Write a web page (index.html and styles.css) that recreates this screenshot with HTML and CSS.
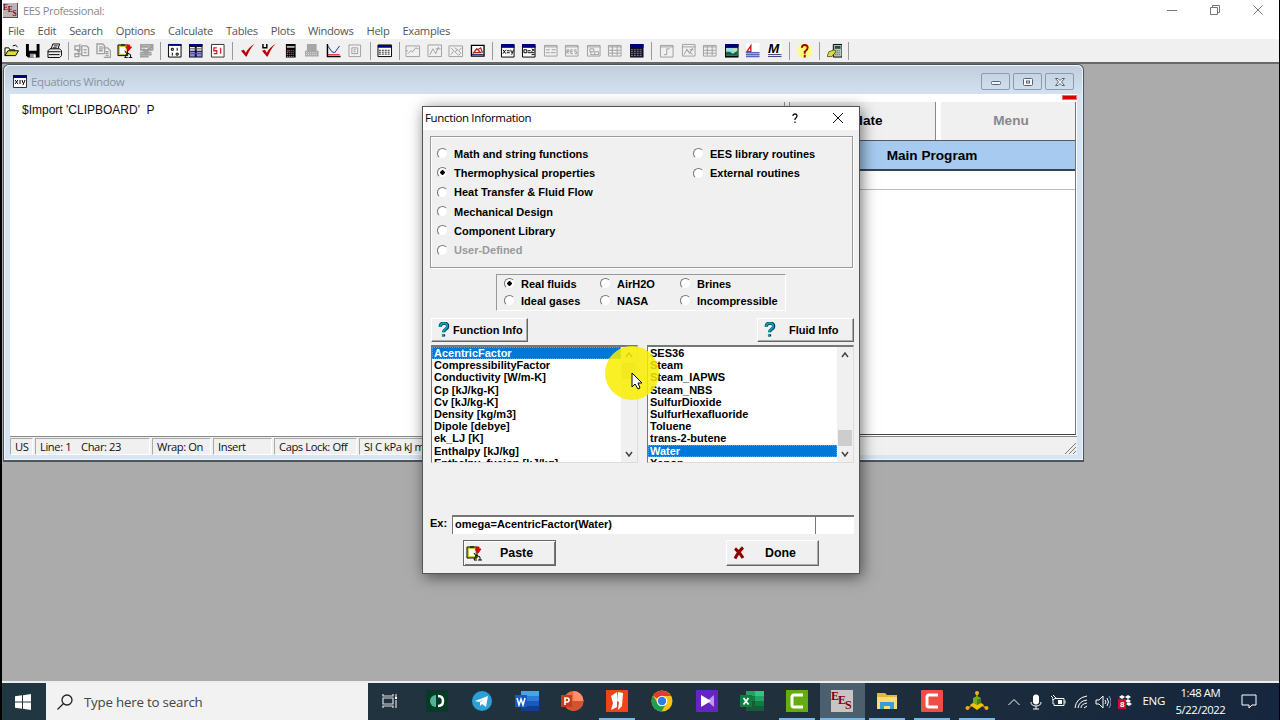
FILE: index.html
```html
<!DOCTYPE html>
<html lang="en">
<head>
  <title>EES Professional</title>
  <meta charset="UTF-8">
  <link rel="stylesheet" href="styles.css">
</head>
<body>
<svg class="defs">
  <symbol id="question" viewBox="0 0 12 16"><path d="M2 5C2 0 10 0 10 4.500C10 8 5.500 7.500 5.500 11M5.500 13v2.500" fill="none" stroke="#035" stroke-width="3.400"/><path d="M2 5C2 0 9.500 0 9.500 4.500C9.500 8 5 7.500 5 11M5 13v2.500" fill="none" stroke="#0aa5b5" stroke-width="2"/></symbol>
  <symbol id="paste" viewBox="0 0 16 16"><path d="M1 2h10v11H1z" fill="#cc3" stroke="#000"/><path d="M3 4h6v7H3z" fill="#fff"/><path d="M4 1h4v2H4z" fill="#333"/><path d="M11 2h2v2h2l-3 4-3-4h2z" fill="#d00" stroke="#d00"/><path d="M8 8l2 3-2 4M10 10l4 2v3M8 15h3M12 15h4" stroke="#000" fill="none"/></symbol>
  <symbol id="up" viewBox="0 0 8 8"><path d="M1 6l3-4 3 4" fill="none" stroke="#444" stroke-width="1.500"/></symbol>
  <symbol id="down" viewBox="0 0 8 8"><path d="M1 2l3 4 3-4" fill="none" stroke="#444" stroke-width="1.500"/></symbol>
  <symbol id="grid" viewBox="0 0 16 16"><path d="M1 2h14v12H1z" fill="#fff" stroke="#000"/><path d="M1 2h14v3H1z" fill="#000080"/><path d="M2 7.500h12M2 9.500h12M2 11.500h12" stroke="#222" stroke-dasharray="2 1"/></symbol>
</svg>
<div class="screen">
  <header class="titlebar">
    <svg class="app-icon" viewBox="0 0 16 16"><path d="M0 0h16v16H0z" fill="#bbb4b4"/><path d="M0 15.500h16M15.500 0v16" stroke="#544"/><g fill="#800010" font-family="Liberation Serif" font-weight="bold" font-size="8"><text x="0" y="7">E</text><text x="5" y="10">E</text><text x="10" y="14">S</text></g></svg>
    <span class="app-name">EES Professional:</span>
    <div class="win-controls">
      <svg viewBox="0 0 10 10"><path d="M0 5.500h10"/></svg>
      <svg viewBox="0 0 10 10"><path d="M.5 2.500h7v7h-7zM2.500 2.500v-2h7v7h-2"/></svg>
      <svg viewBox="0 0 10 10"><path d="M.5.500l9 9M9.500.500l-9 9"/></svg>
    </div>
  </header>
  <nav class="menu">
    <span>File</span><span>Edit</span><span>Search</span><span>Options</span><span>Calculate</span><span>Tables</span><span>Plots</span><span>Windows</span><span>Help</span><span>Examples</span>
  </nav>
  <div class="toolbar">
    <svg viewBox="0 0 16 16"><path d="M1 13V5h4l1 2h5v2" fill="#ffc" stroke="#000"/><path d="M1 13l3-5h11l-3 5z" fill="#dd3" stroke="#000"/><path d="M9 3q3-2 5 1" fill="none" stroke="#000"/></svg>
    <svg viewBox="0 0 16 16"><path d="M1 1h14v14H3l-2-2z"/><path d="M4 1h8v7H4z" fill="#eee"/><path d="M5 11h6v4H5z" fill="#999"/><path d="M9 12h2v3H9z" fill="#fff"/></svg>
    <svg viewBox="0 0 16 16"><path d="M4 7l2-6h7l-2 6z" fill="#fff" stroke="#000"/><path d="M1 8l2-2h10l2 2v5l-2 2H1z" fill="#eee" stroke="#000"/><path d="M1 9h13M2 12h11M7 3h4M6 5h4" stroke="#000"/></svg>
    <i class="narrow"></i>
    <svg class="off" viewBox="0 0 16 16"><path d="M1 3h5v4H1zM6 1v7l-3 4M3 7l4 5M8 3h5l2 2v8H8zM10 7h3M10 10h3M1 11h4v3H1z" stroke-width="1.400"/></svg>
    <svg class="off" viewBox="0 0 16 16"><path d="M1 1h6l2 2v8H1zM3 4h4M3 6h4M3 8h4M7 5h5l3 3v7H8M10 9h3M10 11h3M10 13h3" stroke-width="1.400"/></svg>
    <svg><use href="#paste"/></svg>
    <svg class="off" viewBox="0 0 16 16"><path d="M2 2h12v5H2zM2 4h8M1 10h12M1 12h12M1 14h9" stroke-width="1.800"/><path d="M4 6l3 4 7-8" stroke-width="3"/></svg>
    <i class="narrow"></i>
    <svg viewBox="0 0 16 16"><path d="M1.500 1.500h13v13h-13z" fill="#fff" stroke="#000"/><path d="M1 1h14v2H1z" fill="#000080"/><path d="M4.500 5.500h2v2h-2zM10.500 5v3M5.500 10v3M9.500 10.500h2v2h-2z" fill="none" stroke="#000"/></svg>
    <svg viewBox="0 0 16 16"><path d="M1 1h14v14H1z" fill="#112"/><path d="M1 1h14v2H1z" fill="#008"/><path d="M2 4h5v4H2zM9 4h5v4H9z" fill="#eee"/><path d="M2 9h5v5H2zM9 9h5v5H9z" fill="#88e"/><path d="M2 6h12M2 11h12" stroke="#555"/></svg>
    <svg viewBox="0 0 16 16"><path d="M1.500 1.500h13v13h-13z" fill="#fff" stroke="#333"/><path d="M7 5H4v3h3v3H4M11 5v6" fill="none" stroke="#c22" stroke-width="1.300"/></svg>
    <i></i>
    <svg viewBox="0 0 16 16"><path d="M1 8l3-1 2 3q3-6 9-9-5 5-8 13H6z" fill="#c00000"/></svg>
    <svg viewBox="0 0 16 16"><path d="M1 8l3-1 2 3q3-6 9-9-5 5-8 13H6z" fill="#c00000"/><path d="M2 1v4h4V1" fill="none" stroke="#000" stroke-width="1.500"/></svg>
    <svg viewBox="0 0 16 16"><path d="M3 1h10v14H3z"/><path d="M4 3h8v2H4z" fill="#aba"/><path d="M4 8h8M4 10h8M4 12h8M4 14h8" stroke="#aaa" stroke-dasharray="1 1"/><path d="M4 7h2v2H4z" fill="#c22"/></svg>
    <svg viewBox="0 0 16 16"><path d="M3 1h10v7H3zM1 8h14v6H1z" fill="#a6a6a6"/><path d="M2 10h12M2 12h12" stroke="#eee" stroke-dasharray="1 1"/></svg>
    <svg viewBox="0 0 16 16"><path d="M1.500 1v13H15" fill="none" stroke="#000" stroke-width="1.500"/><path d="M2 3l4 6 3 1 5-7" fill="none" stroke="#22a"/><path d="M2 12h12" stroke="#d22"/></svg>
    <svg class="off" viewBox="0 0 16 16"><path d="M2 2h12v12H2zM5 5h6v6H5zM7 8q0-2 2-1M7 9h2"/></svg>
    <i></i>
    <svg><use href="#grid"/></svg>
    <i class="narrow"></i>
    <svg class="off" viewBox="0 0 16 16"><path d="M1 3h14v11H1zM3 11l3-3 2 1 3-4 3 1M1 8h2"/></svg>
    <svg class="off" viewBox="0 0 16 16"><path d="M1 2h14v12H1zM3 12l3-6 3 5 3-7M9 6h5"/></svg>
    <svg class="off" viewBox="0 0 16 16"><path d="M1 3h14v11H1zM3 5l3 3-3 4M7 5l3 2-3 2 3 3M14 5l-3 3 2 2-2 3"/></svg>
    <svg viewBox="0 0 16 16"><path d="M1.500 2.500h13v11h-13z" fill="#fff" stroke="#000" stroke-width="1.400"/><path d="M3 11l4-5 4 4H4M8 7l3-2 2 5" fill="none" stroke="#a22" stroke-width="1.300"/><path d="M2 12h12" stroke="#116"/></svg>
    <i></i>
    <svg viewBox="0 0 16 16"><path d="M1.500 2.500h13v12h-13z" fill="#fff" stroke="#000"/><path d="M1 1h14v4H1z" fill="#000080"/><path d="M3 7l3 4M6 7l-3 4M7 8h3M7 10h3M11 7l1 3M14 7l-2 5" stroke="#000"/></svg>
    <svg viewBox="0 0 16 16"><path d="M1.500 2.500h13v12h-13z" fill="#fff" stroke="#000"/><path d="M1 1h14v4H1z" fill="#000080"/><path d="M3 7h3v3H3zM7 8h3M7 10h3M11 6l3 2M14 6l-3 3M10 10h4M11 12h3" stroke="#000" fill="none"/></svg>
    <svg class="off" viewBox="0 0 16 16"><path d="M1.500 2.500h13v11h-13zM1 4h14M3 7h4M9 7h4M3 10h4M8 10h5"/></svg>
    <svg class="off" viewBox="0 0 16 16"><path d="M1.500 2.500h13v11h-13zM1 4h14M3 11V7h2v2H3l2 2M9 7H7v4h2M7 9h2M13 7h-2v2h2v2h-2"/></svg>
    <svg class="off" viewBox="0 0 16 16"><path d="M1.500 2.500h13v11h-13zM1 4h14M4 6h4v3H4zM9 9h4v3H9zM5 9v3h4"/></svg>
    <svg class="off" viewBox="0 0 16 16"><path d="M1.500 2.500h13v11h-13zM1 4h14M5.500 3v10M10.500 3v10M2 7.500h12M2 10.500h12"/></svg>
    <svg viewBox="0 0 16 16"><path d="M1 1h14v14H1z" fill="#112"/><path d="M1 1h14v4H1z" fill="#000080"/><path d="M2 7h12M2 9h12M2 11h12M2 13h12" stroke="#889" stroke-dasharray="2 1"/></svg>
    <i></i>
    <svg class="off" viewBox="0 0 16 16"><path d="M1.500 2.500h13v12h-13zM1 4h14M5 12h3V6h3"/></svg>
    <svg class="off" viewBox="0 0 16 16"><path d="M1.500 1.500h13v12h-13zM1 4h14M3 12l3-5 3 4 3-6M9 7h4M5 6l7 6"/></svg>
    <svg class="off" viewBox="0 0 16 16"><path d="M1.500 2.500h13v11h-13zM1 4h14M5.500 3v10M10.500 3v10M2 7.500h12M2 10.500h12"/></svg>
    <svg viewBox="0 0 16 16"><path d="M1 1h14v14H1z"/><path d="M1 1h14v3H1z" fill="#000080"/><path d="M2 5h12v8H2z" fill="#9dd"/><path d="M2 9h4l3 2 5-3v5H2z" fill="#164"/><path d="M10 6h3v2h-3z" fill="#ee3"/></svg>
    <svg viewBox="0 0 16 16"><path d="M1 0h14v9H1z" fill="#fff"/><path d="M2 9l4-6v6z" fill="none" stroke="#c22" stroke-width="1.500"/><path d="M1 10h14M1 12h14M1 14h14" stroke="#56b" stroke-width="1.500"/></svg>
    <svg viewBox="0 0 16 16"><path d="M1 0h14v15H1z" fill="#fff"/><text x="1" y="10.500" font-family="Liberation Sans" font-size="14" font-weight="bold" font-style="italic">M</text><path d="M1 12h14M1 14h14" stroke="#337"/></svg>
    <i></i>
    <svg viewBox="0 0 16 16"><circle cx="8" cy="8" r="7.500" fill="#ffff78"/><path d="M5 5q0-3 3-3t3 3q0 2-3 4v2M8 12v3" fill="none" stroke="#a00000" stroke-width="2"/></svg>
    <i></i>
    <svg viewBox="0 0 16 16"><path d="M6.500 1.500h9v13h-9z" fill="#bcb" stroke="#000"/><path d="M8 3h6v3H8z" fill="#253"/><path d="M8 8h6M8 10h6M8 12h6" stroke="#444" stroke-dasharray="1 1"/><path d="M0 14l2-5 6-2 1 2-4 5z" fill="#dd3" stroke="#330" stroke-width=".7"/></svg>
    <i class="narrow"></i>
  </div>

  <main class="workspace">
    <section class="eq-window">
      <div class="eq-title">
        <svg class="eq-icon" viewBox="0 0 14 13"><path d="M.5 1.500h13v11H.500z" fill="#fff" stroke="#333"/><path d="M0 0h14v3H0z" fill="#000080"/><path d="M2 5l3 4M5 5l-3 4M6 6h2M6 8h2M9 5l1 3M12 5l-2 5" stroke="#000"/></svg>
        <span>Equations Window</span>
        <div class="eq-controls">
          <b><svg viewBox="0 0 12 10"><rect x="1.500" y="4.500" width="9" height="3" rx="1"/></svg></b>
          <b><svg viewBox="0 0 12 10"><rect x="1.500" y="1.500" width="9" height="7" rx="1"/><rect x="4.500" y="4" width="3" height="2"/></svg></b>
          <b><svg viewBox="0 0 12 10"><path d="M1.500 1.500h2.500l2 2 2-2h2.500L7.500 5l3 3.500H8l-2-2-2 2H1.500L4.500 5z"/></svg></b>
        </div>
      </div>
      <div class="eq-body">
        <div class="editor"><span>$Import 'CLIPBOARD'&nbsp; P</span></div>
        <aside class="diagram">
          <div class="diagram-buttons"><div class="update">Update</div><div class="menu-button">Menu</div></div>
          <div class="program">Main Program</div>
          <div class="program-row"></div>
        </aside>
        <div class="red-mark"></div>
      </div>
      <footer class="status">
        <span class="s-us">US</span><span class="s-line">Line: 1 &nbsp;&nbsp; Char: 23</span><span class="s-wrap">Wrap: On</span><span class="s-ins">Insert</span><span class="s-caps">Caps Lock: Off</span><span class="s-unit">SI C kPa kJ mass deg</span>
        <svg class="grip" viewBox="0 0 12 12"><path d="M1 12L12 1M5 12l7-7M9 12l3-3" stroke="#777"/></svg>
      </footer>
    </section>

    <section class="dialog">
      <div class="dialog-title"><span>Function Information</span><svg class="help" viewBox="0 0 6 10"><path d="M1 3q0-2 2-2t2 2q0 1-2 3v1M3 8.500V10" fill="none" stroke="#111" stroke-width="1.300"/></svg><svg class="close" viewBox="0 0 10 10"><path d="M0 0l10 10M10 0L0 10" stroke="#111"/></svg></div>
      <div class="categories">
        <div class="column">
          <label><i class="radio"></i>Math and string functions</label>
          <label><i class="radio on"></i>Thermophysical properties</label>
          <label><i class="radio"></i>Heat Transfer &amp; Fluid Flow</label>
          <label><i class="radio"></i>Mechanical Design</label>
          <label><i class="radio"></i>Component Library</label>
          <label class="disabled"><i class="radio"></i>User-Defined</label>
        </div>
        <div class="column">
          <label><i class="radio"></i>EES library routines</label>
          <label><i class="radio"></i>External routines</label>
        </div>
      </div>
      <div class="fluids">
        <label><i class="radio on"></i>Real fluids</label><label><i class="radio"></i>AirH2O</label><label><i class="radio"></i>Brines</label>
        <label><i class="radio"></i>Ideal gases</label><label><i class="radio"></i>NASA</label><label><i class="radio"></i>Incompressible</label>
      </div>
      <div class="info-row">
        <div class="btn fn-info"><svg><use href="#question"/></svg><span>Function Info</span></div>
        <div class="btn fl-info"><svg><use href="#question"/></svg><span>Fluid Info</span></div>
      </div>
      <div class="lists">
        <div class="list">
          <ul><li class="selected">AcentricFactor</li><li>CompressibilityFactor</li><li>Conductivity [W/m-K]</li><li>Cp [kJ/kg-K]</li><li>Cv [kJ/kg-K]</li><li>Density [kg/m3]</li><li>Dipole [debye]</li><li>ek_LJ [K]</li><li>Enthalpy [kJ/kg]</li><li>Enthalpy_fusion [kJ/kg]</li></ul>
          <div class="scroll top"><svg><use href="#up"/></svg><div class="thumb"></div><svg><use href="#down"/></svg></div>
        </div>
        <div class="list">
          <ul><li>SES36</li><li>Steam</li><li>Steam_IAPWS</li><li>Steam_NBS</li><li>SulfurDioxide</li><li>SulfurHexafluoride</li><li>Toluene</li><li>trans-2-butene</li><li class="selected">Water</li><li>Xenon</li></ul>
          <div class="scroll bottom"><svg><use href="#up"/></svg><div class="thumb"></div><svg><use href="#down"/></svg></div>
        </div>
      </div>
      <div class="example"><span>Ex:</span><div class="field">omega=AcentricFactor(Water)</div><div class="field unit"></div></div>
      <div class="actions">
        <div class="btn paste"><svg><use href="#paste"/></svg><span>Paste</span></div>
        <div class="btn done"><svg viewBox="0 0 12 14"><path d="M2 2.500q5 4 8 9.500M10 1.500Q6 5 2 12.500" fill="none" stroke="#8b0000" stroke-width="3"/></svg><span>Done</span></div>
      </div>
    </section>
    <div class="spot"></div>
    <svg class="pointer" viewBox="0 0 12 18"><path d="M1 1v14l3-3 3 5 2-1-2-5h4z" fill="#fff" stroke="#000"/></svg>
  </main>

  <footer class="taskbar">
    <div class="start"><svg viewBox="0 0 16 16"><path d="M0 2.300L7 1.300V7.500H0zM8 1.200L16 0v7.500H8zM0 8.500h7v6.200L0 13.700zM8 8.500h8V16l-8-1.200z" fill="#fff"/></svg></div>
    <div class="search"><svg viewBox="0 0 16 16"><circle cx="10" cy="6" r="5"/><path d="M6.500 9.500L.5 15.500"/></svg><span>Type here to search</span></div>
    <div class="task view"><svg viewBox="0 0 16 16"><path d="M1 1v2h10V1M1 5h10v6H1zM1 15v-2h10v2M14 1v3M14 7v8" fill="none" stroke="#ddd" stroke-width="1.200"/><path d="M13 4h2v2h-2z" fill="#fff"/></svg></div>
    <div class="task"><svg viewBox="0 0 22 22"><path d="M0 0h22v22H0z" fill="#063b27"/><path d="M10 5v12a6 6 0 0 1 0-12z" fill="#52b59a"/><path d="M12 6q5 0 5 5t-5 5" fill="none" stroke="#fff" stroke-width="2.500"/></svg></div>
    <div class="task"><svg viewBox="0 0 22 22"><circle cx="11" cy="11" r="10" fill="#2ba0d8"/><path d="M4 11l13-5-2 11-4-3-2 2v-4l5-4-6 4z" fill="#fff"/></svg></div>
    <div class="task"><svg class="wide" viewBox="0 0 24 22"><path d="M6 1h18v5H6z" fill="#41a5ee"/><path d="M6 6h18v5H6z" fill="#2b7cd3"/><path d="M6 11h18v5H6z" fill="#185abd"/><path d="M6 16h18v5H6z" fill="#103f91"/><path d="M0 5h12v12H0z" fill="#185abd"/><path d="M2 8l2 7 2-6 2 6 2-7" fill="none" stroke="#fff" stroke-width="1.500"/></svg></div>
    <div class="task"><svg class="wide" viewBox="0 0 24 22"><circle cx="13.500" cy="11" r="10" fill="#ed6c47"/><path d="M13.500 1a10 10 0 0 1 10 10h-10z" fill="#ff8f6b"/><path d="M3.500 11h20a10 10 0 0 1-20 0z" fill="#d35230"/><path d="M1 5h11v12H1z" fill="#c43e1c"/><path d="M5 15V8h2q2 0 2 2t-2 2H5" fill="none" stroke="#fff" stroke-width="1.600"/></svg></div>
    <div class="task running"><svg viewBox="0 0 22 22"><path d="M0 0h22v22H0z" fill="#ee4418"/><path d="M5 6l6-4v15l-6 3 2-7zM12 2l5 1-1 13-4 4 1-8-2-1z" fill="#fff"/></svg></div>
    <div class="task"><svg viewBox="0 0 22 22"><circle cx="11" cy="11" r="10.500" fill="#fbc116"/><path d="M11 11L1.900 5.800A10.500 10.500 0 0 1 20 6H11z" fill="#e33b2e"/><path d="M1.900 5.800A10.500 10.500 0 0 0 10.500 21.500L15 14l-8-1z" fill="#229f4c"/><circle cx="11" cy="11" r="5.300" fill="#fff"/><circle cx="11" cy="11" r="4.200" fill="#3978e8"/></svg></div>
    <div class="task"><svg viewBox="0 0 22 22"><path d="M0 0h22v22H0z" fill="#6524c4"/><path d="M18 5v12l-7-6z" fill="#b99af0"/><path d="M5 5l10 6-10 6z" fill="#fff"/></svg></div>
    <div class="task"><svg class="wide" viewBox="0 0 24 22"><path d="M6 1h18v5H6z" fill="#21a366"/><path d="M15 1h9v5h-9z" fill="#33c481"/><path d="M6 6h9v5H6z" fill="#107c41"/><path d="M15 6h9v5h-9z" fill="#21a366"/><path d="M6 11h18v10H6z" fill="#185c37"/><path d="M15 11h9v5h-9z" fill="#107c41"/><path d="M0 5h12v12H0z" fill="#107c41"/><path d="M3.500 8l5 6.500M8.500 8l-5 6.500" stroke="#fff" stroke-width="1.700"/></svg></div>
    <div class="task running"><svg viewBox="0 0 22 22"><path d="M0 0h22v22H0z" fill="#63ad12"/><path d="M17 5H8q-2 0-2 2v8q0 2 2 2h9" fill="none" stroke="#fff" stroke-width="3"/></svg></div>
    <div class="task running active"><svg viewBox="0 0 22 22"><path d="M0 0h22v22H0z" fill="#c8c4c4"/><g fill="#800010" font-family="Liberation Serif" font-weight="bold" font-size="12"><text x="0" y="10">E</text><text x="7" y="14">E</text><text x="14" y="19">S</text></g></svg></div>
    <div class="task running"><svg viewBox="0 0 22 22"><path d="M1 3h8l2 2h10v14H1z" fill="#e9b63d"/><path d="M1 7h20v12H1z" fill="#ffdc73"/><path d="M4 19v-7h14v7h-4v-3H8v3z" fill="#3c9bd6"/></svg></div>
    <div class="task running"><svg viewBox="0 0 22 22"><rect width="22" height="22" rx="1" fill="#ef4e45"/><path d="M17 5H8q-2 0-2 2v8q0 2 2 2h9" fill="none" stroke="#fff" stroke-width="3"/></svg></div>
    <div class="task running"><svg class="wide" viewBox="0 0 24 22"><path d="M12 3v9L3 18M12 12l9 6" fill="none" stroke="#c90" stroke-width="1.500"/><path d="M12 10l7 5-7 5-7-5z" fill="#f4c400"/><path d="M8 8l4-2 4 2v5l-4 2-4-2z" fill="#6fae18"/><path d="M12 10l4-2v5l-4 2z" fill="#4a7d12"/><circle cx="12" cy="3" r="2" fill="#f5b80c"/><circle cx="2.500" cy="18" r="2" fill="#f5a90c"/><circle cx="21.500" cy="18" r="2" fill="#f5a90c"/></svg></div>
    <div class="tray">
      <svg viewBox="0 0 16 16"><path d="M2.500 11L8 5.500l5.500 5.500"/></svg>
      <svg viewBox="0 0 16 16"><rect x="5.500" y="1" width="5" height="9" rx="2" fill="#fff"/><path d="M3 8q0 4 5 4t5-4M8 12v3M5 15h6"/></svg>
      <svg viewBox="0 0 16 16"><path d="M5 4.500h9v7H4v-2M15 6.500v3M1 2l2 2M3 1l2 2M2 5q2 2 4-2M3 5v5"/><path d="M8 6h4v4H8z" fill="#fff" stroke="none"/></svg>
      <svg viewBox="0 0 16 16"><path d="M2 14Q3 4 14 2M5 14q1-7 9-8M8 14q0-4 6-5M11 14l3-2"/></svg>
      <svg viewBox="0 0 16 16"><path d="M1 6h3l4-4v12l-4-4H1zM10 6q2 2 0 4M12 4q3 4 0 8"/><path d="M14 2q4 6 0 12" stroke="#89a"/></svg>
      <svg viewBox="0 0 16 16"><path d="M5 1l3 2-3 2-3-2zM11 1l3 2-3 2-3-2zM11 5l3 2-3 2-3-2zM9 10l3 2 3-2-3-2z" fill="#fff" stroke="none"/><path d="M1 5h8v10H1z" fill="#c8102e" stroke="none"/><text x="3" y="13" font-size="8" fill="#fff" stroke="none" font-weight="bold" font-family="Liberation Sans">8</text></svg>
    </div>
    <span class="lang">ENG</span>
    <div class="clock"><span>1:48 AM</span><span>5/22/2022</span></div>
    <svg class="notice" viewBox="0 0 16 16"><path d="M1 2h14v10h-4l-3 3v-3H1z" fill="none" stroke="#fff"/></svg>
  </footer>
</div>
</body>
</html>
```
FILE: styles.css
```css
* { box-sizing: border-box; }
body { margin: 0; background: #000; font-family: "Open Sans", sans-serif; }
svg { display: block; flex: none; }
.defs { display: none; }
.screen { width: 1280px; height: 720px; padding: 0 1px 0 2px; display: flex; flex-direction: column; overflow: hidden; }

.titlebar { height: 21px; background: #fff; display: flex; align-items: center; padding-left: 1px; flex: none; }
.app-icon { width: 15px; height: 15px; }
.app-name { margin-left: 5px; font-size: 11px; color: #888; letter-spacing: -0.35px; }
.win-controls { margin-left: auto; display: flex; gap: 33px; padding: 0 16px 2px 0; }
.win-controls svg { width: 10px; height: 10px; fill: none; stroke: #777; }
.menu { height: 18px; background: #fff; display: flex; gap: 13px; padding-left: 6px; font-size: 11.2px; line-height: 19px; color: #555; letter-spacing: -0.3px; flex: none; }
.toolbar { height: 25px; background: #f0f0f0; border-bottom: 2px solid #686868; display: flex; align-items: center; flex: none; }
.toolbar svg { width: 15.5px; height: 15.5px; margin: 0 3px; }
.toolbar svg:first-child { margin-left: 1.5px; }
.toolbar i { width: 1px; height: 18px; margin: 0 3.8px; background: #999; }
.toolbar i.narrow { margin: 0 2.7px; }
.off { fill: none; stroke: #a0a0a0; }

.workspace { position: relative; height: 617px; background: #ababab; flex: none; }
.eq-window { position: absolute; left: 1px; top: 0; width: 1081px; height: 398px; border: 1px solid #4b555e; border-bottom-width: 2px; border-radius: 6px 6px 0 0; background: #d7e4f2; box-shadow: inset 0 0 0 1px #eff5fb; padding: 0 6px; }
.eq-title { height: 28px; margin: 1px -5px 0; padding: 3px 8px 0 8px; background: linear-gradient(#c2cedc, #d3e1f0); border-radius: 5px 5px 0 0; display: flex; align-items: center; font-size: 11.5px; letter-spacing: -0.4px; color: #8795a3; }
.eq-icon { width: 14px; height: 13px; }
.eq-title span { margin-left: 4px; }
.eq-controls { margin-left: auto; display: flex; gap: 3px; }
.eq-controls b { width: 29px; height: 17px; border: 1px solid #8a9cb0; border-radius: 2px; display: flex; align-items: center; justify-content: center; }
.eq-controls svg { width: 12px; height: 10px; fill: #f4f8fc; stroke: #556373; }
.eq-body { position: relative; height: 343px; background: #fff; border-bottom: 1px solid #888; display: flex; }
.editor { flex: 1; padding: 7px 12px; font: 12px/18px "Liberation Sans", sans-serif; color: #111; }
.diagram { width: 292px; border-right: 1px solid #777; border-bottom: 1px solid #444; margin: 8px 1px 1px 0; font-family: "Liberation Sans", sans-serif; font-weight: bold; font-size: 13.6px; text-align: center; }
.diagram-buttons { height: 38px; display: flex; line-height: 38px; gap: 5px; border-left: 1px solid #999; padding-left: 4px; }
.update { width: 147px; background: #f0f0f0; border-left: 1px solid #999; border-right: 1px solid #888; padding-right: 6px; }
.menu-button { flex: 1; color: #888; background: #f0f0f0; padding-left: 6px; }
.program { height: 31px; line-height: 29px; background: #a6caf0; border-top: 1px solid #556; border-bottom: 2px solid #345; padding-left: 5px; }
.program-row { height: 19px; border-bottom: 1px solid #bbb; }
.red-mark { position: absolute; right: 0; top: 1px; width: 15px; height: 5px; background: #d90000; border: 1px solid #f66; }
.status { height: 18px; display: flex; background: #f0f0f0; font-size: 11.2px; line-height: 16px; letter-spacing: -0.42px; padding-top: 1px; color: #111; }
.status span { border: 1px solid #aaa; border-right-color: #fff; border-bottom-color: #fff; padding-left: 4px; margin-right: 2px; white-space: nowrap; overflow: hidden; }
.s-us { width: 23px; }
.s-line { width: 115px; }
.s-wrap { width: 59px; }
.s-ins { width: 59px; }
.s-caps { width: 83px; }
.s-unit { width: 120px; }
.grip { margin: 4px 1px 0 auto; width: 12px; height: 12px; }

.dialog { position: absolute; left: 420px; top: 42px; width: 438px; height: 468px; background: #f0f0f0; border: 1px solid #555; box-shadow: 2px 3px 14px rgba(0,0,0,0.55); font: bold 11px/12px "Liberation Sans", sans-serif; color: #000; }
.dialog-title { height: 23px; background: #fff; display: flex; align-items: center; padding: 0 16px 2px 2px; font: 11.5px "Open Sans", sans-serif; letter-spacing: -0.35px; }
.help { width: 6px; height: 10px; margin-left: auto; margin-right: 35px; }
.close { width: 10px; height: 10px; }
.categories { margin: 6px 6px 0 7px; height: 132px; border: 1px solid #999; box-shadow: inset 1px 1px #fff, 1px 1px #fff; padding: 7px 6px; display: flex; }
.column { width: 256px; flex: none; display: flex; flex-direction: column; }
label { display: flex; align-items: center; height: 19.4px; white-space: nowrap; }
.radio { width: 11px; height: 11px; border-radius: 50%; background: #fff; border: 1px solid; border-color: #777 #eee #eee #777; margin-right: 6px; flex: none; }
.on { background: radial-gradient(circle, #000 0, #000 2px, #fff 2.4px); }
.disabled { color: #999; }
.fluids { margin: 6px 0 0 73px; width: 290px; height: 37px; border: 1px solid #999; border-right-color: #fff; border-bottom-color: #fff; display: grid; grid-template-columns: 96px 80px 1fr; grid-template-rows: 17px 17px; padding: 0 7px; }
.fluids label { height: 17px; }
.info-row { margin: 7px 5px 0 8px; display: flex; justify-content: space-between; }
.btn { display: flex; align-items: center; border: 1px solid; border-color: #fff #666 #666 #fff; box-shadow: inset -1px -1px #aaa; }
.info-row .btn { height: 24px; width: 97px; padding: 0 0 1px 6px; }
.info-row svg { width: 12px; height: 15px; margin-right: 3px; }
.info-row .fl-info svg { margin-right: 13px; }
.lists { margin: 3px 5px 0 8px; display: flex; justify-content: space-between; }
.list { width: 207px; height: 118px; background: #fff; border: 1px solid #ddd; border-top: 2px solid #777; border-left-color: #777; overflow: hidden; display: flex; }
ul { list-style: none; margin: 0; padding: 0; flex: 1; }
li { height: 12.2px; line-height: 12.2px; padding-left: 2px; white-space: nowrap; }
.selected { background: #0078d7; color: #fff; outline: 1px dotted #5aa5e0; outline-offset: -1px; }
.scroll { width: 16px; background: #f0f0f0; display: flex; flex-direction: column; align-items: center; padding: 4px 0; }
.scroll svg { width: 8px; height: 8px; }
.thumb { width: 14px; height: 16px; background: #cdcdcd; }
.top .thumb { margin: 4px 0 auto; }
.bottom .thumb { margin: auto 0 4px; }
.example { margin: 52px 5px 0 7px; height: 19px; display: flex; line-height: 17px; }
.example > span { width: 22px; }
.field { width: 363px; background: #fff; border-top: 2px solid #777; border-left: 1px solid #777; padding-left: 2px; line-height: 15px; }
.unit { flex: 1; }
.actions { display: flex; justify-content: space-between; margin: 6px 40px 0 40px; font-size: 12.4px; }
.actions .btn { width: 93px; height: 26px; }
.paste { border-color: #666; box-shadow: inset 1px 1px #fff, inset -1px -1px #777; padding-left: 2px; }
.paste svg { width: 16px; height: 16px; margin-right: 18px; }
.done { padding-left: 6px; }
.done svg { width: 12px; height: 14px; margin-right: 20px; }
.spot { position: absolute; left: 603px; top: 282px; width: 54px; height: 54px; border-radius: 50%; background: rgba(248, 238, 0, 0.85); }
.pointer { position: absolute; left: 629px; top: 308px; width: 12px; height: 18px; }

.taskbar { height: 39px; border-top: 2px solid #eee; background: linear-gradient(90deg, #203640, #20303c 60%, #15263e); display: flex; flex: none; color: #fff; }
.start { width: 44px; padding-right: 2px; display: flex; align-items: center; justify-content: center; }
.start svg { width: 16px; height: 16px; }
.search { width: 322px; background: #f2f2f2; display: flex; align-items: center; padding-left: 11px; font-size: 13.3px; letter-spacing: -0.2px; color: #444; }
.search svg { width: 16px; height: 16px; margin-right: 11px; fill: none; stroke: #222; stroke-width: 1.3; }
.task { width: 45px; display: flex; align-items: center; justify-content: center; border-bottom: 2px solid transparent; }
.task svg { width: 22px; height: 22px; }
.task .wide { width: 24px; }
.task.view { width: 46.5px; padding-right: 2px; }
.view svg { width: 16px; height: 16px; }
.running { background: linear-gradient(#76b9ed, #76b9ed) center bottom / 36px 2px no-repeat; background-origin: border-box; }
.active { background-color: #4b5f6c; background-size: 45px 2px; }
.tray { display: flex; align-items: center; gap: 6.4px; margin-left: 6px; }
.tray svg { width: 16px; height: 16px; fill: none; stroke: #fff; }
.lang { font-size: 11.5px; line-height: 36px; margin-left: 9px; width: 22px; letter-spacing: -0.3px; }
.clock { width: 60px; margin-left: 6px; display: flex; flex-direction: column; align-items: center; font-size: 11.3px; letter-spacing: -0.4px; line-height: 17px; padding-top: 1px; }
.notice { width: 16px; height: 16px; margin: 10px 0 0 11px; }
```
